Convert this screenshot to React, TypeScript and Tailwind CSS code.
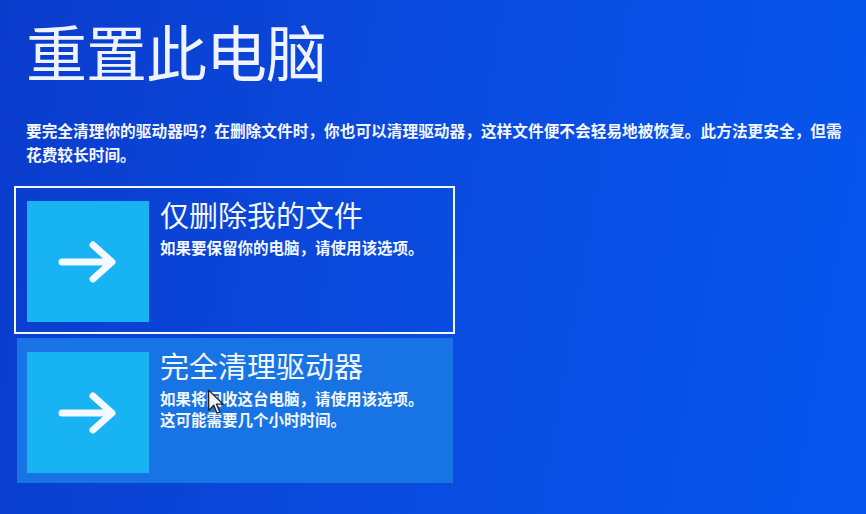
import React from "react";

const font = { fontFamily: '"Noto Sans CJK SC", "Noto Sans", sans-serif' };

function ArrowIcon() {
  return (
    <svg width="60" height="44" viewBox="0 0 60 44" fill="none">
      <path
        d="M4 22 H53 M35 5 L54 22 L35 39"
        stroke="#f4f8ff"
        strokeWidth="7"
        strokeLinecap="round"
        strokeLinejoin="round"
      />
    </svg>
  );
}

function Cursor() {
  return (
    <svg
      className="absolute left-[207px] top-[389px]"
      width="19"
      height="27"
      viewBox="0 0 16 24"
    >
      <path
        d="M1 1 L1 19 L5.5 14.5 L8.5 21.5 L11 20.5 L8 13.5 L14 13.5 Z"
        fill="#f2f2f2"
        stroke="#222"
        strokeWidth="1.2"
        strokeLinejoin="round"
      />
    </svg>
  );
}

interface OptionProps {
  title: string;
  lines: string[];
  focused?: boolean;
}

function Option({ title, lines, focused }: OptionProps) {
  return (
    <button
      className={
        focused
          ? "flex h-[142px] w-[435px] items-start pl-[10px] pt-[12px] text-left outline-2 outline-offset-[1px] outline-[#f2f6ff]"
          : "flex h-[145px] w-[436px] items-start bg-[#1873e4] pl-[10px] pt-[14px] text-left"
      }
    >
      <div className="flex h-[121px] w-[122px] shrink-0 items-center justify-center bg-[#18b3f3]">
        <ArrowIcon />
      </div>
      <div className="-mt-[5px] ml-[11px] flex flex-col text-[#f3f7ff]">
        <span className="text-[29px] leading-[36px] font-normal">{title}</span>
        <span className="mt-[5px] text-[15.5px] leading-[21px] font-semibold">
          {lines.map((l, i) => (
            <React.Fragment key={i}>
              {l}
              {i < lines.length - 1 && <br />}
            </React.Fragment>
          ))}
        </span>
      </div>
    </button>
  );
}

export default function App() {
  return (
    <div
      className="relative h-[514px] w-[866px] overflow-hidden bg-[linear-gradient(100deg,#0a3ccc_0%,#0a4ade_45%,#0656ee_100%)]"
      style={font}
    >
      <div className="flex flex-col pl-[26px] pt-[20px]">
        <h1 className="text-[61px] leading-none font-normal tracking-[-1px] text-[#eef3ff]">
          重置此电脑
        </h1>
        <p className="mt-[38px] whitespace-nowrap text-[15.7px] leading-[24px] font-semibold text-[#f3f7ff]">
          要完全清理你的驱动器吗？在删除文件时，你也可以清理驱动器，这样文件便不会轻易地被恢复。此方法更安全，但需
          <br />
          花费较长时间。
        </p>
        <div className="-ml-[9px] mt-[22px] flex flex-col gap-[7px]">
          <Option
            focused
            title="仅删除我的文件"
            lines={["如果要保留你的电脑，请使用该选项。"]}
          />
          <Option
            title="完全清理驱动器"
            lines={["如果将回收这台电脑，请使用该选项。", "这可能需要几个小时时间。"]}
          />
        </div>
      </div>
      <Cursor />
    </div>
  );
}
